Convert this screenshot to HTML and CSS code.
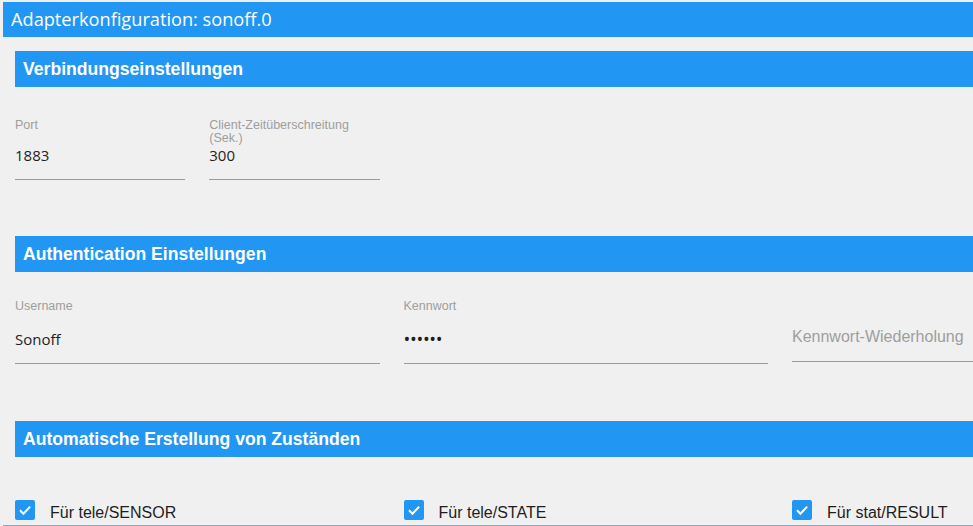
FILE: index.html
```html
<!DOCTYPE html>
<html lang="de">
<head>
  <meta charset="UTF-8" />
  <meta name="viewport" content="width=device-width, initial-scale=1" />
  <title>Adapterkonfiguration: sonoff.0</title>
  <link rel="stylesheet" href="styles.css">
</head>
<body>
  <div class="app">
    <header class="titlebar">Adapterkonfiguration: sonoff.0</header>

    <main class="content">
      <!-- Verbindung -->
      <section class="section">
        <h2 class="section-head">Verbindungseinstellungen</h2>
        <div class="section-body connection">
          <div class="half-grid">
            <div class="field">
              <label class="field-label">Port</label>
              <div class="field-input"><span class="value">1883</span></div>
            </div>
            <div class="field">
              <label class="field-label">Client-Zeitüberschreitung (Sek.)</label>
              <div class="field-input"><span class="value">300</span></div>
            </div>
          </div>
        </div>
      </section>

      <!-- Authentication -->
      <section class="section">
        <h2 class="section-head">Authentication Einstellungen</h2>
        <div class="section-body auth">
          <div class="grid">
            <div class="field">
              <label class="field-label">Username</label>
              <div class="field-input wide"><span class="value">Sonoff</span></div>
            </div>
            <div class="field">
              <label class="field-label">Kennwort</label>
              <div class="field-input wide"><span class="value password">&bull;&bull;&bull;&bull;&bull;&bull;</span></div>
            </div>
            <div class="field">
              <label class="field-label"></label>
              <div class="field-input wide"><span class="placeholder">Kennwort-Wiederholung</span></div>
            </div>
          </div>
        </div>
      </section>

      <!-- Automatische Zustaende -->
      <section class="section">
        <h2 class="section-head">Automatische Erstellung von Zuständen</h2>
        <div class="section-body states">
          <div class="grid">
            <label class="check">
              <span class="check-box">
                <svg viewBox="0 0 20 20" width="20" height="20"><path d="M5 10.3l3.4 3.4L15.2 6.6" /></svg>
              </span>
              <span class="check-label">Für tele/SENSOR</span>
            </label>
            <label class="check">
              <span class="check-box">
                <svg viewBox="0 0 20 20" width="20" height="20"><path d="M5 10.3l3.4 3.4L15.2 6.6" /></svg>
              </span>
              <span class="check-label">Für tele/STATE</span>
            </label>
            <label class="check">
              <span class="check-box">
                <svg viewBox="0 0 20 20" width="20" height="20"><path d="M5 10.3l3.4 3.4L15.2 6.6" /></svg>
              </span>
              <span class="check-label">Für stat/RESULT</span>
            </label>
          </div>
        </div>
      </section>
    </main>

    <div class="footer-line"></div>
  </div>
</body>
</html>
```

FILE: styles.css
```css
:root {
  --blue: #2196f3;
  --blue-light: #64b5f6;
  --bg: #f0f0f0;
  --grey: #9e9e9e;
  --line: #9a9a9a;
  --text: #1e1e1e;
  --white: #ffffff;
}

body {
  margin: 0;
  background: var(--bg);
  overflow: hidden;
  font-family: "Liberation Sans", Arial, sans-serif;
}

h1,
h2,
p {
  margin: 0;
}

.app {
  padding: 2px 0 0 3px;
  width: 1200px;
}

/* top bar with the adapter name */
.titlebar {
  height: 35px;
  line-height: 35px;
  padding-left: 8px;
  background: var(--blue);
  color: var(--white);
  font-family: "Open Sans", sans-serif;
  font-size: 18.2px;
}

.content {
  padding: 14px 0 0 12px;
}

.section-head {
  height: 36px;
  line-height: 36px;
  padding-left: 8px;
  background: var(--blue);
  color: var(--white);
  font-size: 17.6px;
  font-weight: bold;
}

.section-body.connection {
  padding: 32px 0 56px;
}

.section-body.auth {
  padding: 28px 0 57px;
}

.section-body.states {
  padding: 43px 0 2px;
}

.grid {
  display: grid;
  grid-template-columns: repeat(3, 364.5px);
  column-gap: 24px;
}

.half-grid {
  display: grid;
  grid-template-columns: repeat(2, 170.25px);
  column-gap: 24px;
}

/* text fields */
.field-label {
  display: block;
  max-width: 160px;
  height: 14px;
  line-height: 13px;
  font-size: 12.5px;
  color: var(--grey);
}

.field-input {
  margin-top: 12px;
  height: 20px;
  padding-bottom: 14px;
  border-bottom: 1px solid var(--line);
}

.field-input.wide {
  margin-top: 15px;
  padding-bottom: 14px;
}

.value {
  display: block;
  line-height: 20px;
  font-family: "Open Sans", sans-serif;
  font-size: 15px;
  color: var(--text);
}

.password {
  font-size: 18px;
  letter-spacing: -0.3px;
}

.placeholder {
  display: block;
  margin-top: -2px;
  line-height: 20px;
  font-size: 16px;
  color: var(--grey);
}

/* checkboxes */
.check {
  display: flex;
  align-items: flex-start;
  gap: 15px;
}

.check-box {
  width: 20px;
  height: 20px;
  border-radius: 2px;
  background: var(--blue);
  flex-shrink: 0;
}

.check-box svg {
  display: block;
  fill: none;
  stroke: var(--white);
  stroke-width: 2;
}

.check-label {
  padding-top: 3px;
  line-height: 20px;
  font-size: 16px;
  color: var(--text);
}

.footer-line {
  border-top: 1px solid var(--blue-light);
}
```
